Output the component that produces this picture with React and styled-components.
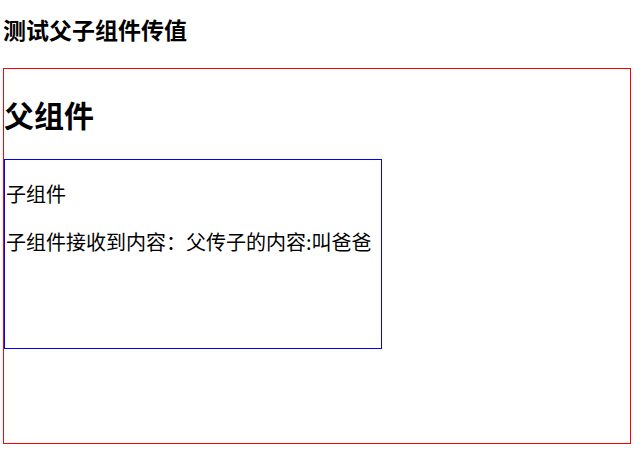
import React from 'react'
import styled, { createGlobalStyle } from "styled-components"

const GlobalStyle = createGlobalStyle`
    body {
        margin: 0;
        background: #fff;
        color: #000;
        font-family: "Noto Sans CJK SC", "Noto Sans", sans-serif;
    }
`;

const Page = styled.div`
    padding: 0 3px;
`;

const Title = styled.h3`
    font-size: 23px;
    font-weight: bold;
    line-height: 30px;
    margin: 14px 0 24px;
`;

const Parent = styled.div`
    border: 1px solid red;
    width: 626px;
    height: 374px;
`;

const ParentTitle = styled.h2`
    font-size: 30px;
    font-weight: bold;
    line-height: 36px;
    margin: 27px 0 27px;
`;

const Child = styled.div`
    border: 1px solid blue;
    width: 376px;
    height: 188px;
`;

const Text = styled.p`
    font-size: 20px;
    line-height: 28px;
    margin: 20px 0 0;
    padding-left: 1px;
`;

const Son = ({ msg }) => {
  return (
    <Child>
        <Text>子组件</Text>
        <Text>子组件接收到内容：{msg}</Text>
    </Child>
  )
}

const App = () => {
  return (
    <Page>
        <GlobalStyle />
        <Title>测试父子组件传值</Title>
        <Parent>
            <ParentTitle>父组件</ParentTitle>
            <Son msg="父传子的内容:叫爸爸" />
        </Parent>
    </Page>
  )
}

export default App
